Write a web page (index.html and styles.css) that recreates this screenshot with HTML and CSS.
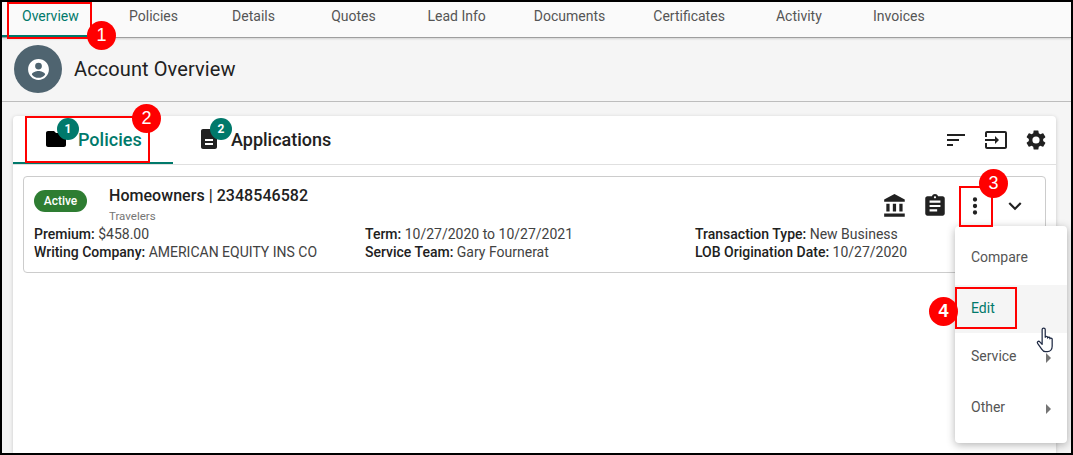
FILE: index.html
```html
<!DOCTYPE html>
<html lang="en">
<head>
<meta charset="utf-8">
<title>Account Overview</title>
<link rel="stylesheet" href="styles.css">
</head>
<body>
<div class="frame">
  <nav class="topnav">
    <a class="toptab first active">Overview</a>
    <a class="toptab">Policies</a>
    <a class="toptab">Details</a>
    <a class="toptab">Quotes</a>
    <a class="toptab">Lead Info</a>
    <a class="toptab">Documents</a>
    <a class="toptab">Certificates</a>
    <a class="toptab">Activity</a>
    <a class="toptab">Invoices</a>
  </nav>
  <header class="pagehead">
    <span class="avatar">
      <svg viewBox="0 0 24 24" width="25" height="25"><path fill="#fff" d="M12 2C6.48 2 2 6.48 2 12s4.48 10 10 10 10-4.48 10-10S17.52 2 12 2zm0 3.5a3.25 3.25 0 1 1 0 6.5 3.25 3.25 0 0 1 0-6.5zM12 20c-2.6 0-5-1.3-6.4-3.3.05-2.1 4.3-3.3 6.4-3.3s6.35 1.2 6.4 3.3C17 18.7 14.6 20 12 20z"/></svg>
    </span>
    <h1 class="pagetitle">Account Overview</h1>
  </header>
  <main class="content">
    <section class="panel">
      <div class="panelbar">
        <div class="paneltab active">
          <span class="tabicon">
            <svg viewBox="0 0 24 24" width="24" height="24"><path fill="#000" d="M10 4H4c-1.1 0-2 .9-2 2v12c0 1.1.9 2 2 2h16c1.1 0 2-.9 2-2V8c0-1.1-.9-2-2-2h-8l-2-2z"/></svg>
            <span class="count">1</span>
          </span>
          <span class="tablabel">Policies</span>
        </div>
        <div class="paneltab">
          <span class="tabicon">
            <svg viewBox="0 0 24 24" width="24" height="24"><path fill="#212121" d="M14 2H6c-1.1 0-2 .9-2 2v16c0 1.1.9 2 2 2h12c1.1 0 2-.9 2-2V8l-6-6zm2 16H8v-2h8v2zm0-4H8v-2h8v2z"/></svg>
            <span class="count">2</span>
          </span>
          <span class="tablabel">Applications</span>
        </div>
        <div class="tools">
          <svg viewBox="0 0 24 24" width="24" height="24"><path fill="#212121" d="M3 6h18v2H3zM3 11h12v2H3zM3 16h6v2H3z"/></svg>
          <svg viewBox="0 0 24 24" width="24" height="24"><path fill="#212121" d="M21 3.01H3c-1.1 0-2 .9-2 2V9h2V4.99h18v14.03H3V15H1v4.01c0 1.1.9 1.98 2 1.98h18c1.1 0 2-.88 2-1.98v-14a2 2 0 0 0-2-2zM11 16l4-4-4-4v3H1v2h10v3z"/></svg>
          <svg viewBox="0 0 24 24" width="24" height="24"><path fill="#212121" d="M19.14 12.94c.04-.3.06-.61.06-.94s-.02-.64-.07-.94l2.03-1.58a.49.49 0 0 0 .12-.61l-1.92-3.32a.49.49 0 0 0-.59-.22l-2.39.96c-.5-.38-1.03-.7-1.62-.94l-.36-2.54a.48.48 0 0 0-.48-.41h-3.84c-.24 0-.43.17-.47.41l-.36 2.54c-.59.24-1.13.57-1.62.94l-2.39-.96a.48.48 0 0 0-.59.22L2.74 8.87c-.12.21-.08.47.12.61l2.03 1.58c-.05.3-.09.63-.09.94s.02.64.07.94l-2.03 1.58a.49.49 0 0 0-.12.61l1.92 3.32c.12.22.37.29.59.22l2.39-.96c.5.38 1.03.7 1.62.94l.36 2.54c.05.24.24.41.48.41h3.84c.24 0 .44-.17.47-.41l.36-2.54c.59-.24 1.13-.56 1.62-.94l2.39.96c.22.08.47 0 .59-.22l1.92-3.32a.48.48 0 0 0-.12-.61l-2.01-1.58zM12 15.6A3.6 3.6 0 1 1 12 8.4a3.6 3.6 0 0 1 0 7.2z"/></svg>
        </div>
      </div>
      <article class="policy">
        <div class="policyhead">
          <span class="status">Active</span>
          <div class="policyname">
            <div class="policytitle">Homeowners | 2348546582</div>
            <div class="carrier">Travelers</div>
          </div>
          <div class="actions">
            <svg viewBox="0 0 24 24" width="26" height="26"><path fill="#212121" d="M4 10v7h3v-7H4zm6 0v7h3v-7h-3zM2 22h19v-3H2v3zm14-12v7h3v-7h-3zM11.5 1 2 6v2h19V6l-9.5-5z"/></svg>
            <svg viewBox="0 0 24 24" width="26" height="26"><path fill="#212121" d="M19 3h-4.18C14.4 1.84 13.3 1 12 1s-2.4.84-2.82 2H5c-1.1 0-2 .9-2 2v14c0 1.1.9 2 2 2h14c1.1 0 2-.9 2-2V5c0-1.1-.9-2-2-2zm-7 0c.55 0 1 .45 1 1s-.45 1-1 1-1-.45-1-1 .45-1 1-1zm2 14H7v-2h7v2zm3-4H7v-2h10v2zm0-4H7V7h10v2z"/></svg>
            <svg viewBox="0 0 24 24" width="26" height="26"><path fill="#212121" d="M12 8a2 2 0 1 0 0-4 2 2 0 0 0 0 4zm0 2a2 2 0 1 0 0 4 2 2 0 0 0 0-4zm0 6a2 2 0 1 0 0 4 2 2 0 0 0 0-4z"/></svg>
            <svg viewBox="0 0 24 24" width="26" height="26"><path fill="#212121" d="M7.41 8.59 12 13.17l4.59-4.58L18 10l-6 6-6-6z"/></svg>
          </div>
        </div>
        <div class="facts">
          <div class="fact"><b>Premium:</b> $458.00</div>
          <div class="fact"><b>Term:</b> 10/27/2020 to 10/27/2021</div>
          <div class="fact"><b>Transaction Type:</b> New Business</div>
          <div class="fact"><b>Writing Company:</b> AMERICAN EQUITY INS CO</div>
          <div class="fact"><b>Service Team:</b> Gary Fournerat</div>
          <div class="fact"><b>LOB Origination Date:</b> 10/27/2020</div>
        </div>
      </article>
    </section>
  </main>

  <ul class="menu">
    <li class="menuitem">Compare</li>
    <li class="menuitem hover">Edit</li>
    <li class="menuitem">Service<i class="caret"></i></li>
    <li class="menuitem">Other<i class="caret"></i></li>
  </ul>

  <svg class="cursor" viewBox="0 0 20 28" width="20" height="27"><path fill="#fff" stroke="#1f2a44" stroke-width="1.3" stroke-linejoin="round" d="M6 2.5c0-1.8 3.2-1.8 3.2 0v8.2c0-1.3 2.4-1.3 2.4 0v.8c0-1.2 2.4-1.2 2.4 0v.8c0-1.1 2.4-1.1 2.4.2V20c0 3-2 5.5-5 5.5H9.5c-2 0-3-1-4-2.6L1.3 17c-1-1.6 1-3 2.3-1.6L6 18V2.5z"/></svg>

  <span class="callout box-overview"></span>
  <span class="callout box-policies"></span>
  <span class="callout box-kebab"></span>
  <span class="callout box-edit"></span>
  <span class="pin pin1">1</span>
  <span class="pin pin2">2</span>
  <span class="pin pin3">3</span>
  <span class="pin pin4">4</span>
</div>
</body>
</html>
```
FILE: styles.css
```css
* { box-sizing: border-box; }
html, body { margin: 0; padding: 0; }
body { font-family: Roboto, "Liberation Sans", sans-serif; color: #212121; background: #fff; }

.frame {
  position: relative;
  width: 1073px;
  height: 455px;
  border: 2px solid #000;
  overflow: hidden;
  background: #f5f5f5;
  display: flex;
  flex-direction: column;
}

.topnav {
  display: flex;
  height: 36px;
  flex: none;
  background: #fafafa;
  border-bottom: 1px solid #9e9e9e;
  box-shadow: 0 1px 2px rgba(0,0,0,.15);
  position: relative;
}
.toptab {
  min-width: 100px;
  padding: 0 24px;
  font-size: 14px;
  font-weight: 400;
  line-height: 28px;
  text-align: center;
  color: #555;
}
.toptab.first { width: 101.5px; padding: 0 0 0 20px; text-align: left; }
.toptab.active { color: #00796b; border-bottom: 2px solid #00796b; }

.pagehead {
  flex: none;
  height: 64px;
  display: flex;
  align-items: center;
  gap: 12px;
  padding: 0 0 1px 12px;
  border-bottom: 1px solid #bdbdbd;
}
.avatar {
  width: 48px;
  height: 48px;
  border-radius: 50%;
  background: #4f6470;
  display: flex;
  align-items: center;
  justify-content: center;
}
.pagetitle { margin: 0; font-size: 20px; font-weight: 400; color: #212121; letter-spacing: .1px; }

.content { flex: 1; padding: 14px 15px 0 11px; min-height: 0; }
.panel {
  height: 100%;
  background: #fff;
  border-radius: 4px 4px 0 0;
  box-shadow: 0 1px 4px rgba(0,0,0,.18);
}
.panelbar {
  height: 49px;
  display: flex;
  align-items: center;
  border-bottom: 1px solid #e0e0e0;
}
.paneltab {
  height: 48px;
  display: flex;
  align-items: center;
  gap: 10px;
  padding-left: 24px;
  font-size: 18px;
  font-weight: 500;
  border-bottom: 2px solid transparent;
}
.paneltab.active { width: 160px; padding-left: 31px; color: #00796b; border-bottom-color: #00796b; }
.tabicon { position: relative; display: flex; }
.count {
  position: absolute;
  left: 13px;
  top: -9px;
  width: 22px;
  height: 22px;
  border-radius: 50%;
  background: #00796b;
  color: #fff;
  font-size: 12px;
  font-weight: 700;
  display: flex;
  align-items: center;
  justify-content: center;
}
.tools { margin-left: auto; display: flex; gap: 16px; padding-right: 8px; }

.policy {
  margin: 11px 10px 0;
  height: 97px;
  border: 1px solid #ccc;
  border-radius: 4px;
  padding: 9px 10px;
}
.policyhead { display: flex; align-items: flex-start; }
.status {
  margin-top: 4px;
  width: 53px;
  height: 22px;
  border-radius: 11px;
  background: #2e7d32;
  color: #fff;
  font-size: 12px;
  font-weight: 500;
  display: flex;
  align-items: center;
  justify-content: center;
}
.policyname { margin-left: 22px; }
.policytitle { font-size: 16px; font-weight: 500; line-height: 20px; letter-spacing: .04px; }
.carrier { font-size: 11.5px; color: #757575; line-height: 16px; margin-top: 2px; }
.actions { margin-left: auto; display: flex; gap: 14px; margin-top: 7px; padding-right: 7px; }

.facts {
  display: grid;
  grid-template-columns: 331px 330px 1fr;
  font-size: 14px;
  line-height: 18px;
  color: #424242;
  margin-top: 1px;
}
.fact b { font-weight: 500; color: #212121; }

.menu {
  position: absolute;
  left: 953px;
  top: 224px;
  width: 112px;
  height: 217px;
  margin: 0;
  padding: 7px 0;
  list-style: none;
  background: #fff;
  border-radius: 4px;
  box-shadow: 0 2px 8px rgba(0,0,0,.3);
}
.menuitem {
  position: relative;
  height: 48px;
  padding-left: 16px;
  display: flex;
  align-items: center;
  font-size: 14px;
  color: #555;
  margin-bottom: 3px;
}
.menuitem:first-child { margin-bottom: 4px; }
.menuitem:nth-child(n+3) { padding-bottom: 2px; }
.menuitem.hover { background: #f5f5f5; color: #00796b; margin-bottom: 0; padding-bottom: 2px; }
.caret {
  position: absolute;
  right: 16px;
  top: 20px;
  border-left: 5px solid #757575;
  border-top: 5px solid transparent;
  border-bottom: 5px solid transparent;
}

.cursor { position: absolute; left: 1034px; top: 325px; }

.callout { position: absolute; border: 2px solid #f00; }
.box-overview { left: 5px; top: 0; width: 85px; height: 37px; }
.box-policies { left: 23px; top: 114px; width: 125px; height: 47px; }
.box-kebab { left: 957px; top: 184px; width: 34px; height: 41px; }
.box-edit { left: 953px; top: 285px; width: 62px; height: 42px; }

.pin {
  position: absolute;
  width: 29px;
  height: 29px;
  border-radius: 50%;
  background: #f00;
  color: #fff;
  font-size: 18px;
  display: flex;
  align-items: center;
  justify-content: center;
  font-family: "Liberation Sans", sans-serif;
}
.pin1 { left: 85px; top: 19px; }
.pin2 { left: 130px; top: 102px; }
.pin3 { left: 977px; top: 167px; }
.pin4 { left: 927px; top: 295px; font-weight: 700; }
```
